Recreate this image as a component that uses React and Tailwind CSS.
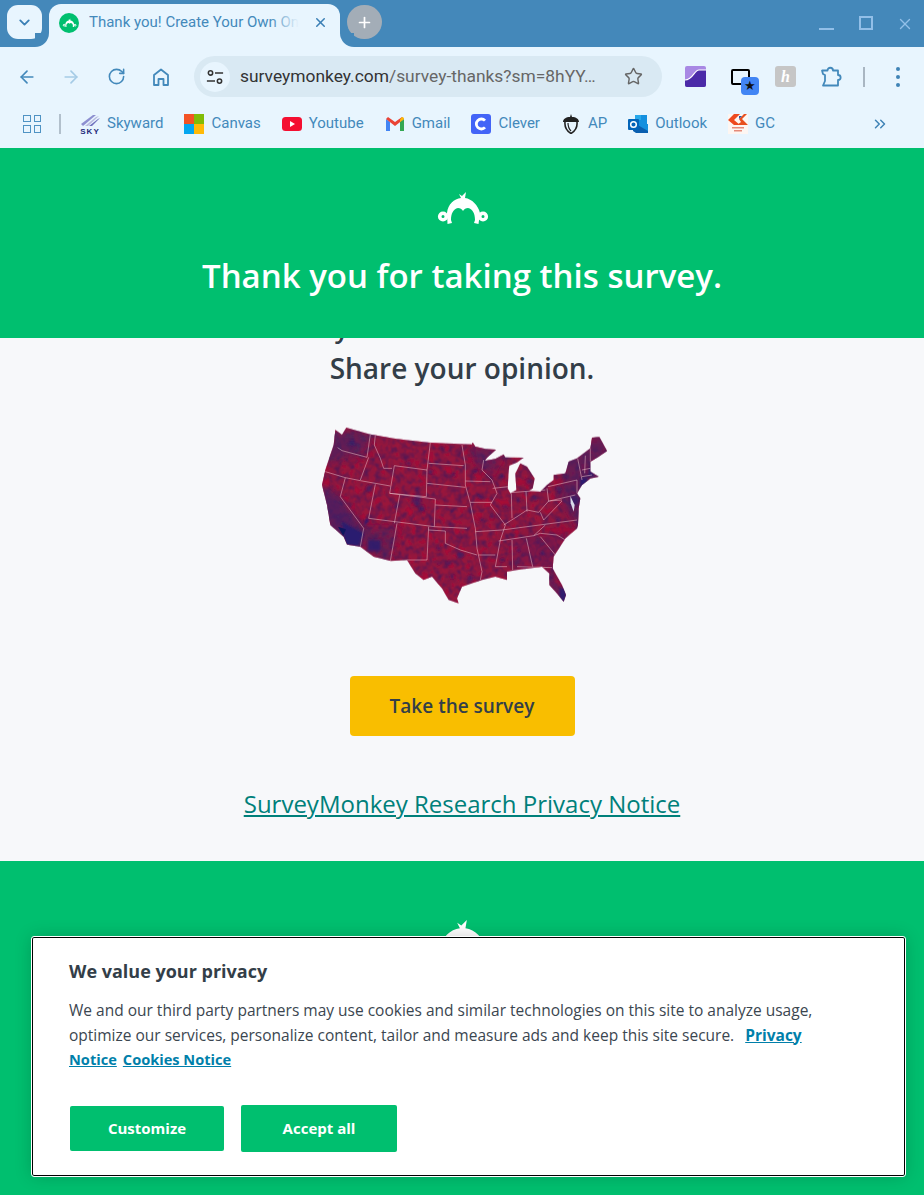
import React from "react";
import { ArrowLeft, ArrowRight, RotateCw, Star, X, Plus, ChevronDown, ChevronsRight } from "lucide-react";

const DOME =
  "M27 33 C28 24 34 19 41 18 L39 14 L42 16 L46 12 L45 18 C52 19 58 25 60 33 L58.5 44 L54 43 L55 40 C55 34 53 29 48 28 C46 28 44 29 43 31 C42 29 40 28 38 28 C33 29 31 34 31 40 L32 43 L27.5 44 Z";

const US_OUTLINE =
  "M133 23 L205 43 L285 57 L385 68 L510 73 L512 67 L520 80 L550 87 L582 89 L555 113 L548 123 L580 117 L605 103 L610 112 L665 113 L645 127 L622 137 L620 155 L617 205 L625 220 L643 210 L640 160 L655 130 L675 140 L698 175 L692 205 L680 213 L715 215 L735 195 L755 180 L755 165 L790 160 L800 125 L825 115 L865 85 L870 53 L892 51 L915 93 L890 110 L865 125 L865 155 L890 170 L865 175 L840 195 L825 220 L835 235 L830 265 L828 315 L825 325 L790 355 L755 410 L752 445 L780 495 L792 525 L785 545 L765 520 L742 495 L742 460 L720 440 L645 450 L615 455 L615 480 L580 470 L540 480 L480 500 L465 535 L470 550 L440 540 L420 505 L390 470 L365 480 L340 460 L315 420 L267 423 L215 410 L175 380 L135 373 L125 350 L85 315 L75 255 L60 195 L70 150 L95 75 L100 30 L120 45 Z";

const STATE_LINES =
  "M107 83 L120 92 L195 112 M205 43 L195 112 M200 112 L175 180 M70 155 L130 173 L175 182 L265 198 M130 173 L115 230 L185 325 L175 380 M220 45 L217 75 L235 115 L245 145 L270 145 M277 137 L375 150 L373 230 L263 220 Z M385 68 L375 150 M380 130 L485 137 M375 190 L490 202 M220 193 L200 295 M293 225 L277 310 M263 220 L400 237 L397 320 M200 295 L397 320 L495 325 M285 310 L265 423 M380 320 L375 420 L315 420 M380 330 L430 333 L430 370 L475 390 L525 405 M400 255 L495 260 M480 75 L490 135 L490 195 L505 250 L520 325 L525 385 L540 455 L535 480 M490 183 L565 185 M545 120 L540 150 L570 180 L585 220 L565 255 L610 315 L595 360 L580 440 M505 247 L570 247 M572 205 L620 200 M628 220 L630 295 M672 215 L675 275 M625 218 L730 210 M735 205 L740 245 M738 200 L825 180 M742 243 L820 225 M825 180 L825 220 M605 315 L645 290 L675 270 L710 277 L740 243 L780 240 M715 277 L725 300 L780 243 M600 330 L825 300 M590 363 L695 347 L730 315 M695 347 L715 340 L765 345 L790 360 M715 350 L760 405 M673 355 L692 440 M630 360 L632 450 M645 440 L750 443 M520 335 L600 330 M530 405 L580 405 M580 440 L615 440 M827 115 L840 180 M850 107 L848 160 M865 85 L865 125 M840 170 L870 165 M840 150 L865 145";

const BLUE_DOTS = [
  [345, 240, 12, 18], [360, 265, 7, 10], [280, 260, 7, 6], [320, 130, 7, 6], [420, 85, 5, 5],
  [385, 155, 7, 7], [455, 165, 5, 5], [475, 405, 10, 9], [505, 475, 9, 10], [450, 470, 6, 7],
  [520, 155, 6, 6], [535, 230, 6, 6], [570, 290, 6, 6], [540, 300, 6, 5], [610, 260, 7, 6],
  [650, 240, 6, 6], [700, 235, 7, 7], [680, 320, 7, 5], [650, 390, 7, 6], [720, 400, 7, 6],
  [600, 420, 6, 6], [770, 300, 8, 7], [770, 205, 9, 8], [600, 170, 7, 7], [680, 185, 8, 8],
  [410, 385, 6, 6], [440, 430, 6, 6], [410, 430, 4, 4], [200, 205, 6, 10], [150, 70, 9, 8],
];

function UsMap() {
  return (
    <svg width="320" height="195" viewBox="0 0 960 585" className="block">
      <defs>
        <clipPath id="us">
          <path d={US_OUTLINE} />
        </clipPath>
        <filter id="soft" x="-20%" y="-20%" width="140%" height="140%">
          <feGaussianBlur stdDeviation="9" />
        </filter>
        <filter id="tiny" x="-20%" y="-20%" width="140%" height="140%">
          <feGaussianBlur stdDeviation="3" />
        </filter>
        <filter id="edge" x="-2%" y="-2%" width="104%" height="104%">
          <feGaussianBlur stdDeviation="0.9" />
        </filter>
        <filter id="county" x="0" y="0" width="100%" height="100%" colorInterpolationFilters="sRGB">
          <feTurbulence type="fractalNoise" baseFrequency="0.05" numOctaves="2" seed="7" />
          <feColorMatrix values="0 0 0 0 0.24  0 0 0 0 0.11  0 0 0 0 0.36  1.6 0 0 0 -0.66" />
        </filter>
        <filter id="countyRed" x="0" y="0" width="100%" height="100%" colorInterpolationFilters="sRGB">
          <feTurbulence type="fractalNoise" baseFrequency="0.035" numOctaves="2" seed="21" />
          <feColorMatrix values="0 0 0 0 0.7  0 0 0 0 0.05  0 0 0 0 0.2  1.8 0 0 0 -0.66" />
        </filter>
      </defs>
      <g filter="url(#edge)">
        <g clipPath="url(#us)">
          <rect width="960" height="585" fill="#8c1540" />
          <rect width="960" height="585" filter="url(#countyRed)" />
          <rect width="960" height="585" filter="url(#county)" />
          <g filter="url(#soft)" fill="#3a2468">
            <path d="M60 190 L120 240 L190 335 L175 385 L125 375 L70 300 Z" opacity="0.7" />
            <path d="M95 25 L210 45 L190 100 L70 130 Z" opacity="0.55" />
            <path d="M185 320 L285 320 L265 430 L190 395 Z" opacity="0.4" />
            <path d="M770 60 L920 50 L900 190 L830 330 L770 230 L790 170 Z" opacity="0.5" />
            <path d="M620 360 L790 340 L750 440 L640 440 Z" opacity="0.25" />
            <path d="M725 440 L800 550 L745 500 Z" opacity="0.9" />
            <path d="M510 70 L610 100 L570 170 L520 130 Z" opacity="0.45" />
          </g>
          <g filter="url(#tiny)" fill="#2a1f70">
            <path d="M120 305 L185 340 L170 378 L130 375 Z" />
            <path d="M190 295 L205 300 L185 320 Z" />
            <rect x="198" y="360" width="38" height="32" opacity="0.85" />
            <rect x="772" y="505" width="22" height="40" opacity="0.9" />
            <rect x="835" y="175" width="20" height="30" />
            <rect x="860" y="145" width="16" height="25" opacity="0.8" />
            <rect x="805" y="225" width="22" height="30" opacity="0.6" />
            {BLUE_DOTS.map(([cx, cy, rx, ry], i) => (
              <ellipse key={i} cx={cx} cy={cy} rx={rx} ry={ry} opacity="0.55" />
            ))}
          </g>
          <path d="M108 320 L132 328 L124 348 Z" fill="#10175f" />
          <path d={STATE_LINES} fill="none" stroke="#edc6cc" strokeOpacity="0.85" strokeWidth="1.8" strokeLinejoin="round" />
          <path d="M838 205 L858 190 L838 212 Z" fill="#f7f8fa" />
          <path d="M805 228 L818 255 L815 275 L806 250 Z" fill="#d9dbe9" />
        </g>
      </g>
    </svg>
  );
}

function MonkeyLogo({ className }) {
  return (
    <svg viewBox="15 10 55 36" className={className}>
      <path d={DOME} fill="white" />
      <circle cx="23" cy="36.5" r="3.3" fill="none" stroke="white" strokeWidth="3.6" />
      <circle cx="63" cy="36.5" r="3.3" fill="none" stroke="white" strokeWidth="3.6" />
    </svg>
  );
}

function Bookmark({ icon, label }) {
  return (
    <div className="flex items-center gap-[7px]">
      <span className="w-5 h-5 flex items-center justify-center shrink-0">{icon}</span>
      <span className="text-[15px] text-[#4389bb] whitespace-nowrap">{label}</span>
    </div>
  );
}

const skyIcon = (
  <svg viewBox="0 0 20 20" className="w-5 h-5">
    <path d="M1 10 L13 1 L16 1 L3 12 Z" fill="#8d8fd0" />
    <path d="M5 12 L16 3 L19 2 L8 12 Z" fill="#b9badf" />
    <path d="M9 12 L18 5 L20 4 L12 12 Z" fill="#6f71bd" />
    <text x="10" y="19.5" textAnchor="middle" fontSize="8" fontWeight="700" letterSpacing="1" fill="#1f2a7a" fontFamily="Liberation Sans">SKY</text>
  </svg>
);

const canvasIcon = (
  <span className="grid grid-cols-2 gap-0 w-5 h-5">
    <span className="bg-[#f35325]" />
    <span className="bg-[#81bc06]" />
    <span className="bg-[#05a6f0]" />
    <span className="bg-[#ffba08]" />
  </span>
);

const youtubeIcon = (
  <svg viewBox="0 0 20 14" className="w-5 h-[14px]">
    <rect width="20" height="14" rx="3.5" fill="#f40f31" />
    <path d="M8 4 L13 7 L8 10 Z" fill="white" />
  </svg>
);

const gmailIcon = (
  <svg viewBox="0 0 18 14" className="w-[18px] h-[14px]">
    <path d="M0 2 L0 14 L4 14 L4 5 Z" fill="#4285f4" />
    <path d="M14 5 L14 14 L18 14 L18 2 Z" fill="#34a853" />
    <path d="M0 2 L9 9 L18 2 L16 0 L9 5 L2 0 Z" fill="#ea4335" />
    <path d="M14 2.5 L16 0 Q18 0 18 2 L14 5 Z" fill="#fbbc04" />
  </svg>
);

const cleverIcon = (
  <span className="w-5 h-5 rounded-[3px] bg-[#4364f7] flex items-center justify-center">
    <svg viewBox="0 0 20 20" className="w-5 h-5">
      <path d="M14 6.6 A5 5 0 1 0 14 13.4" fill="none" stroke="white" strokeWidth="2.8" />
    </svg>
  </span>
);

const acornIcon = (
  <svg viewBox="0 0 18 20" className="w-[18px] h-5">
    <path d="M9 0 L10 3 C14 3 17 5 17 8 L1 8 C1 5 4 3 8 3 Z" fill="#222" />
    <path d="M3 8 C2.5 13 5 17 9 19.5 C13 17 15.5 13 15 8" fill="none" stroke="#222" strokeWidth="1.6" />
    <path d="M6 9 C6 13 7 15 9 17" fill="none" stroke="#222" strokeWidth="1.2" />
  </svg>
);

const outlookIcon = (
  <svg viewBox="0 0 20 20" className="w-5 h-5">
    <path d="M7 1 L19 1 L19 10 L7 10 Z" fill="#1490df" />
    <path d="M7 1 L13 1 L13 6 L7 6 Z" fill="#28a8ea" />
    <path d="M5 10 L20 10 L20 19 L8 19 L5 17 Z" fill="#0a5fb0" />
    <path d="M8 10 L20 17 L20 10 Z" fill="#1490df" />
    <rect x="0" y="5" width="11" height="11" rx="1" fill="#0364b8" />
    <circle cx="5.5" cy="10.5" r="2.8" fill="none" stroke="white" strokeWidth="1.5" />
  </svg>
);

const gcIcon = (
  <svg viewBox="0 0 20 20" className="w-5 h-5">
    <rect width="20" height="20" fill="#fdf6f2" />
    <path d="M0 6 L6 0 L12 0 L6 6 L12 11 L6 11 Z" fill="#ee4a1f" />
    <path d="M11 5 L16 0 L19 0 L14 5 L20 11 L9 11 L13 8 Z" fill="#e8501f" />
    <path d="M11 2 L14 2 L11 5 Z" fill="#2456a6" />
    <rect x="4" y="13" width="12" height="1.5" fill="#e58a78" />
    <rect x="6" y="16" width="8" height="1.5" fill="#e58a78" />
  </svg>
);

function BrowserChrome() {
  return (
    <div className="bg-[#e8f5fe] shrink-0 h-[148px] font-['Roboto',sans-serif]">
      {/* tab strip */}
      <div className="h-[47px] bg-[#4488ba] relative flex items-start">
        <div className="ml-[7px] mt-[5px] w-[35px] h-[34px] rounded-[11px] bg-[#e8f5fe] flex items-center justify-center text-[#3a7fb5]">
          <ChevronDown size={17} strokeWidth={2.6} />
        </div>
        <div className="relative ml-[7px] mt-[4px] w-[291px] h-[43px] bg-[#e8f5fe] rounded-t-[12px] flex items-center pl-[10px] pb-[6px]">
          <span className="absolute -left-[14px] bottom-0 w-[14px] h-[14px] bg-[#e8f5fe]">
            <span className="block w-full h-full bg-[#4488ba] rounded-br-[14px]" />
          </span>
          <span className="absolute -right-[14px] bottom-0 w-[14px] h-[14px] bg-[#e8f5fe]">
            <span className="block w-full h-full bg-[#4488ba] rounded-bl-[14px]" />
          </span>
          <span className="w-5 h-5 rounded-full bg-[#00bf6f] flex items-center justify-center shrink-0">
            <MonkeyLogo className="w-[15px]" />
          </span>
          <span className="relative ml-[10px] w-[210px] overflow-hidden whitespace-nowrap text-[15px] text-[#4389bb]">
            Thank you! Create Your Own On
            <span className="absolute right-0 top-0 bottom-0 w-[30px] bg-gradient-to-r from-[#e8f5fe00] to-[#e8f5fe]" />
          </span>
          <X size={15} strokeWidth={2.4} className="ml-[14px] text-[#3a7fb5]" />
        </div>
        <div className="ml-[7px] mt-[5px] w-[35px] h-[34px] rounded-full bg-[#a3adb7] flex items-center justify-center text-white">
          <Plus size={17} strokeWidth={2.4} />
        </div>
        <div className="ml-auto flex items-start pr-[10px] mt-[15px]">
          <span className="mt-[13px] w-[15px] h-[2px] bg-[#92bfe8]" />
          <span className="ml-[25px] mt-[1px] w-[14px] h-[14px] border-[2px] border-[#92bfe8]" />
          <X size={18} strokeWidth={1.8} className="ml-[23px] text-[#92bfe8]" />
        </div>
      </div>

      {/* toolbar */}
      <div className="h-[58px] flex items-center pt-[1px]">
        <div className="flex items-center text-[#4389bb]">
          <ArrowLeft size={20} strokeWidth={2} className="ml-[17px]" />
          <ArrowRight size={20} strokeWidth={2} className="ml-[24px] text-[#a5cbe6]" />
          <RotateCw size={19} strokeWidth={2} className="ml-[26px]" />
          <svg viewBox="0 0 20 20" className="w-5 h-5 ml-[25px]" fill="none" stroke="#4389bb" strokeWidth="1.8" strokeLinejoin="round">
            <path d="M3 18 L3 8 L10 2.5 L17 8 L17 18 L12.5 18 L12.5 12 L7.5 12 L7.5 18 Z" />
          </svg>
        </div>
        <div className="ml-[23px] w-[468px] h-[41px] rounded-full bg-[#d9e9f3] flex items-center pl-[6px]">
          <span className="w-[30px] h-[30px] rounded-full bg-[#e8f5fe] flex items-center justify-center shrink-0">
            <svg viewBox="0 0 20 20" className="w-[18px] h-[18px]" fill="none" stroke="#333" strokeWidth="1.7">
              <circle cx="5" cy="5.5" r="2.4" />
              <path d="M10 5.5 L19 5.5 M1 14.5 L10 14.5" />
              <circle cx="15" cy="14.5" r="2.4" />
            </svg>
          </span>
          <span className="ml-[10px] text-[17.4px] whitespace-nowrap text-[#333]">
            surveymonkey.com<span className="text-[#666]">/survey-thanks?sm=8hYY…</span>
          </span>
          <Star size={19} strokeWidth={1.8} className="ml-auto mr-[19px] text-[#666]" />
        </div>
        <span className="ml-[23px] w-[21px] h-[21px] rounded-[2px] overflow-hidden block shrink-0">
          <svg viewBox="0 0 21 21" className="w-[21px] h-[21px]">
            <rect width="21" height="21" fill="#a888e4" />
            <path d="M0 14 C8 14 9 4 14 4 L21 4 L21 21 L0 21 Z" fill="#4b2aa8" />
            <path d="M0 14 C8 14 9 4 14 4 L21 4" fill="none" stroke="white" strokeWidth="1.2" />
          </svg>
        </span>
        <span className="relative ml-[25px] w-[19px] h-[16px] border-2 border-black rounded-[2px] shrink-0">
          <span className="absolute -right-[11px] -bottom-[12px] w-[18px] h-[18px] rounded-[4px] bg-[#4285f4] flex items-center justify-center text-[13px] leading-none text-[#111]">★</span>
        </span>
        <span className="ml-[25px] w-[21px] h-[21px] rounded-[3px] bg-[#c6c6c6] flex items-center justify-center text-white text-[16px] font-['Liberation_Serif',serif] italic font-bold shrink-0">h</span>
        <svg viewBox="0 0 22 22" className="ml-[24px] w-[22px] h-[22px] shrink-0" fill="none" stroke="#4389bb" strokeWidth="1.8" strokeLinejoin="round">
          <path d="M2 4.5 L7.5 4.5 C7.5 0.8 13 0.8 13 4.5 L18 4.5 L18 9 C21.5 9 21.5 14 18 14 L18 19.5 L3 19.5 L5 15 L5 9 L3 8 Z" />
        </svg>
        <span className="ml-[21px] w-[1.5px] h-5 bg-[#a9b6c2] shrink-0" />
        <span className="ml-[31px] flex flex-col gap-[4px] shrink-0">
          <span className="w-[4px] h-[4px] rounded-full bg-[#3f83b6]" />
          <span className="w-[4px] h-[4px] rounded-full bg-[#3f83b6]" />
          <span className="w-[4px] h-[4px] rounded-full bg-[#3f83b6]" />
        </span>
      </div>

      {/* bookmarks */}
      <div className="h-[37px] flex items-center">
        <span className="ml-[23px] grid grid-cols-2 gap-[3px] w-[18px] shrink-0">
          <span className="w-[7.5px] h-[7.5px] border-[1.6px] border-[#4f93c4]" />
          <span className="w-[7.5px] h-[7.5px] border-[1.6px] border-[#4f93c4]" />
          <span className="w-[7.5px] h-[7.5px] border-[1.6px] border-[#4f93c4]" />
          <span className="w-[7.5px] h-[7.5px] border-[1.6px] border-[#4f93c4]" />
        </span>
        <span className="ml-[18px] w-[2px] h-5 bg-[#b2c0cc] shrink-0" />
        <div className="ml-[19px] flex items-center gap-[21px]">
          <Bookmark icon={skyIcon} label="Skyward" />
          <Bookmark icon={canvasIcon} label="Canvas" />
          <Bookmark icon={youtubeIcon} label="Youtube" />
          <Bookmark icon={gmailIcon} label="Gmail" />
          <Bookmark icon={cleverIcon} label="Clever" />
          <Bookmark icon={acornIcon} label="AP" />
          <Bookmark icon={outlookIcon} label="Outlook" />
          <Bookmark icon={gcIcon} label="GC" />
        </div>
        <ChevronsRight size={18} strokeWidth={2} className="ml-auto mr-[35px] text-[#3f83b6]" />
      </div>
    </div>
  );
}

function CookieBanner() {
  return (
    <div className="absolute left-[32px] top-[937px] w-[873px] h-[239px] bg-white border border-black rounded-[2px] outline outline-1 outline-white shadow-[0_0_18px_rgba(0,0,0,0.2)] pl-[36px] pt-[21px] text-[#3b4650]">
      <h2 className="text-[18px] leading-[24px] font-bold text-[#333e48]">We value your privacy</h2>
      <p className="mt-[15px] text-[15.5px] leading-[24.5px] whitespace-nowrap">
        We and our third party partners may use cookies and similar technologies on this site to analyze usage,
        <br />
        optimize our services, personalize content, tailor and measure ads and keep this site secure.
        <a href="#privacy" className="ml-[11px] font-bold underline text-[#007faa]">Privacy</a>
        <br />
        <a href="#privacy" className="text-[14.6px] font-bold underline text-[#007faa]">Notice</a>
        <a href="#cookies" className="ml-[6px] text-[14.6px] font-bold underline text-[#007faa]">Cookies Notice</a>
      </p>
      <div className="mt-[33px] ml-[1px] flex items-center gap-[17px]">
        <button className="w-[154px] h-[45px] rounded-[2px] bg-[#00bf6f] text-white text-[15px] font-bold">Customize</button>
        <button className="w-[156px] h-[47px] rounded-[2px] bg-[#00bf6f] text-white text-[15px] font-bold">Accept all</button>
      </div>
    </div>
  );
}

export default function App() {
  return (
    <div className="relative w-full h-[1195px] overflow-hidden flex flex-col bg-[#f7f8fa] font-['Open_Sans',sans-serif]">
      <BrowserChrome />

      <header className="relative z-10 h-[190px] shrink-0 bg-[#00bf6f] flex flex-col items-center pt-[42px]">
        <MonkeyLogo className="w-[55px] h-[36px]" />
        <h1 className="mt-[28px] text-[33px] leading-[44px] font-semibold text-white whitespace-nowrap">
          Thank you for taking this survey.
        </h1>
      </header>

      <main className="-mt-[27px] h-[550px] shrink-0 flex flex-col items-center text-[#333e48]">
        <p className="text-[26px] leading-[34px] font-semibold whitespace-nowrap mb-[6px]">What do you think about the election?</p>
        <p className="text-[28px] leading-[34px] font-semibold whitespace-nowrap">Share your opinion.</p>
        <div className="mt-[35px]">
          <UsMap />
        </div>
        <button className="mt-[61px] w-[225px] h-[60px] rounded-[4px] bg-[#f9be00] text-[19px] font-semibold text-[#333e48]">
          Take the survey
        </button>
        <a href="#research" className="mt-[50px] text-[24px] leading-[36px] text-[#00807a] underline whitespace-nowrap">
          SurveyMonkey Research Privacy Notice
        </a>
      </main>

      <footer className="flex-1 bg-[#00bf6f] flex justify-center pt-[56px]">
        <MonkeyLogo className="w-[76px] h-[50px]" />
      </footer>

      <CookieBanner />
    </div>
  );
}
